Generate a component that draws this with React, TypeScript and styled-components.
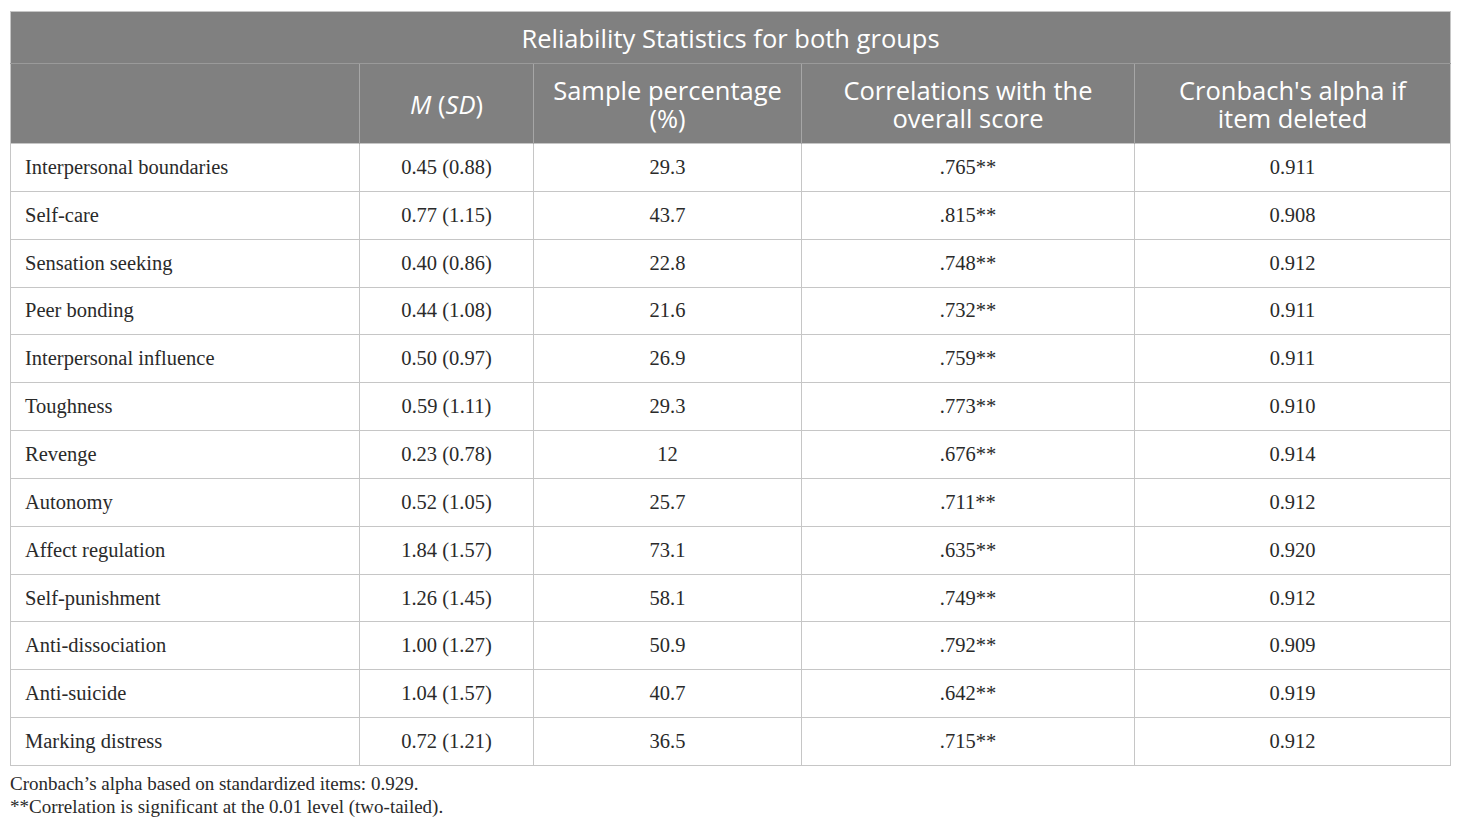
import React from "react";
import styled, { createGlobalStyle } from "styled-components";

const Global = createGlobalStyle`
  html, body { margin: 0; padding: 0; background: #ffffff; }
  body { font-family: "Liberation Serif", "Times New Roman", serif; }
`;

const Page = styled.div`
  padding: 11px 10px 0 10px;
  width: 1440px;
`;

const Table = styled.table`
  width: 1440px;
  border-collapse: collapse;
  table-layout: fixed;
  border: 1px solid #c6c6c6;
`;

const TitleCell = styled.th`
  background: #808080;
  color: #ffffff;
  font-family: "Open Sans", "Noto Sans", sans-serif;
  font-weight: 400;
  font-size: 25.5px;
  height: 51px;
  padding: 0;
  text-align: center;
  border-bottom: 1px solid #9a9a9a;
`;

const HeadCell = styled.th`
  background: #808080;
  color: #ffffff;
  font-family: "Open Sans", "Noto Sans", sans-serif;
  font-weight: 400;
  font-size: 25.5px;
  line-height: 28px;
  height: 79px;
  padding: 0 16px;
  text-align: center;
  vertical-align: middle;
  border-left: 1px solid #a6a6a6;
  &:first-child { border-left: none; }
`;

const Cell = styled.td<{ $left?: boolean }>`
  font-family: "Liberation Serif", "Times New Roman", serif;
  font-size: 20.5px;
  color: #2a2a2a;
  height: 46.85px;
  padding: 0 ${(p) => (p.$left ? "14px" : "8px")};
  text-align: ${(p) => (p.$left ? "left" : "center")};
  vertical-align: middle;
  border: 1px solid #c6c6c6;
`;

const Notes = styled.div`
  font-family: "Liberation Serif", "Times New Roman", serif;
  font-size: 19px;
  color: #2a2a2a;
  line-height: 23px;
  padding-top: 6px;
`;

const rows: [string, string, string, string, string][] = [
  ["Interpersonal boundaries", "0.45 (0.88)", "29.3", ".765**", "0.911"],
  ["Self-care", "0.77 (1.15)", "43.7", ".815**", "0.908"],
  ["Sensation seeking", "0.40 (0.86)", "22.8", ".748**", "0.912"],
  ["Peer bonding", "0.44 (1.08)", "21.6", ".732**", "0.911"],
  ["Interpersonal influence", "0.50 (0.97)", "26.9", ".759**", "0.911"],
  ["Toughness", "0.59 (1.11)", "29.3", ".773**", "0.910"],
  ["Revenge", "0.23 (0.78)", "12", ".676**", "0.914"],
  ["Autonomy", "0.52 (1.05)", "25.7", ".711**", "0.912"],
  ["Affect regulation", "1.84 (1.57)", "73.1", ".635**", "0.920"],
  ["Self-punishment", "1.26 (1.45)", "58.1", ".749**", "0.912"],
  ["Anti-dissociation", "1.00 (1.27)", "50.9", ".792**", "0.909"],
  ["Anti-suicide", "1.04 (1.57)", "40.7", ".642**", "0.919"],
  ["Marking distress", "0.72 (1.21)", "36.5", ".715**", "0.912"],
];

export default function App() {
  return (
    <Page>
      <Global />
      <Table>
        <colgroup>
          <col style={{ width: 349 }} />
          <col style={{ width: 174 }} />
          <col style={{ width: 268 }} />
          <col style={{ width: 333 }} />
          <col style={{ width: 316 }} />
        </colgroup>
        <thead>
          <tr>
            <TitleCell colSpan={5}>Reliability Statistics for both groups</TitleCell>
          </tr>
          <tr>
            <HeadCell></HeadCell>
            <HeadCell>
              <i>M</i> (<i>SD</i>)
            </HeadCell>
            <HeadCell>Sample percentage (%)</HeadCell>
            <HeadCell>Correlations with the overall score</HeadCell>
            <HeadCell>Cronbach's alpha if item deleted</HeadCell>
          </tr>
        </thead>
        <tbody>
          {rows.map((r) => (
            <tr key={r[0]}>
              <Cell $left>{r[0]}</Cell>
              <Cell>{r[1]}</Cell>
              <Cell>{r[2]}</Cell>
              <Cell>{r[3]}</Cell>
              <Cell>{r[4]}</Cell>
            </tr>
          ))}
        </tbody>
      </Table>
      <Notes>
        <div>Cronbach’s alpha based on standardized items: 0.929.</div>
        <div>**Correlation is significant at the 0.01 level (two-tailed).</div>
      </Notes>
    </Page>
  );
}
